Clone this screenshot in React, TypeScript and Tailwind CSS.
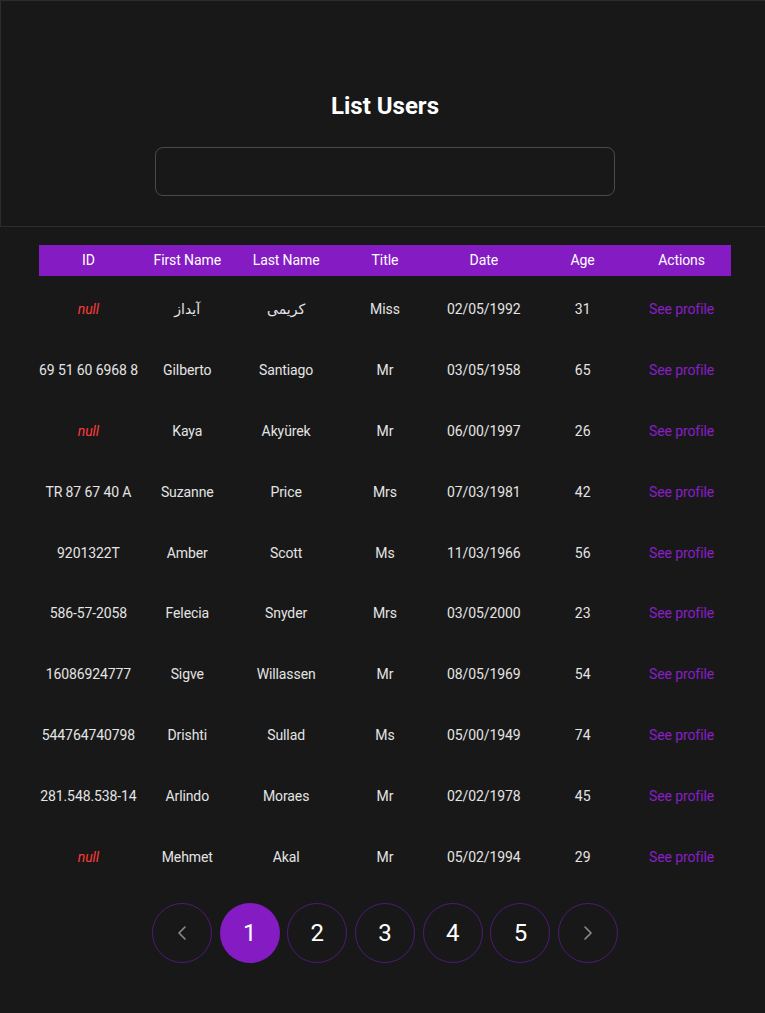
import { ChevronLeft, ChevronRight } from "lucide-react";

type User = {
  id: string | null;
  first: string;
  last: string;
  title: string;
  date: string;
  age: number;
};

const users: User[] = [
  { id: null, first: "آیداز", last: "کریمی", title: "Miss", date: "02/05/1992", age: 31 },
  { id: "69 51 60 6968 8", first: "Gilberto", last: "Santiago", title: "Mr", date: "03/05/1958", age: 65 },
  { id: null, first: "Kaya", last: "Akyürek", title: "Mr", date: "06/00/1997", age: 26 },
  { id: "TR 87 67 40 A", first: "Suzanne", last: "Price", title: "Mrs", date: "07/03/1981", age: 42 },
  { id: "9201322T", first: "Amber", last: "Scott", title: "Ms", date: "11/03/1966", age: 56 },
  { id: "586-57-2058", first: "Felecia", last: "Snyder", title: "Mrs", date: "03/05/2000", age: 23 },
  { id: "16086924777", first: "Sigve", last: "Willassen", title: "Mr", date: "08/05/1969", age: 54 },
  { id: "544764740798", first: "Drishti", last: "Sullad", title: "Ms", date: "05/00/1949", age: 74 },
  { id: "281.548.538-14", first: "Arlindo", last: "Moraes", title: "Mr", date: "02/02/1978", age: 45 },
  { id: null, first: "Mehmet", last: "Akal", title: "Mr", date: "05/02/1994", age: 29 },
];

const headers = ["ID", "First Name", "Last Name", "Title", "Date", "Age", "Actions"];

const App = () => {
  return (
    <div className="w-full min-h-screen overflow-hidden bg-[#181818]">
      <div
        className="w-[770px] text-[#e4e4e4]"
        style={{ fontFamily: "Roboto, 'Noto Sans', 'DejaVu Sans', sans-serif" }}
      >
        <header className="h-[227px] border border-[#2c2c2c] flex flex-col items-center pt-[90px]">
          <h1 className="text-[24px] leading-[30px] font-bold text-white">List Users</h1>
          <input
            type="text"
            className="mt-[26px] w-[460px] h-[49px] rounded-lg border border-[#4a4a4a] bg-transparent outline-none px-3 text-white"
          />
        </header>

        <main className="px-[39px] pt-[18px]">
          <table className="w-full table-fixed border-collapse text-[14px] tracking-[-0.1px]">
            <thead>
              <tr className="bg-[#851bc3] text-white h-[31px]">
                {headers.map((h) => (
                  <th key={h} className="font-normal text-center">
                    {h}
                  </th>
                ))}
              </tr>
            </thead>
            <tbody>
              {users.map((u, i) => (
                <tr key={i} className="h-[60.8px] text-center whitespace-nowrap">
                  <td className="pt-[7px]">
                    {u.id === null ? <span className="italic text-[#ff3a3a]">null</span> : u.id}
                  </td>
                  <td className="pt-[7px]">{u.first}</td>
                  <td className="pt-[7px]">{u.last}</td>
                  <td className="pt-[7px]">{u.title}</td>
                  <td className="pt-[7px]">{u.date}</td>
                  <td className="pt-[7px]">{u.age}</td>
                  <td className="pt-[7px]">
                    <a href="#" className="text-[#8a1ec9]">
                      See profile
                    </a>
                  </td>
                </tr>
              ))}
            </tbody>
          </table>

          <nav className="flex justify-center gap-[7.7px] mt-[19px] pb-[49px]">
            <button className="w-[60px] h-[60px] rounded-full border border-[#4e1a78] flex items-center justify-center text-[#8c8c8c]">
              <ChevronLeft className="w-6 h-6" strokeWidth={1.6} />
            </button>
            {[1, 2, 3, 4, 5].map((n) => (
              <button
                key={n}
                className={
                  n === 1
                    ? "w-[60px] h-[60px] rounded-full bg-[#851bc3] text-white text-[24px] flex items-center justify-center"
                    : "w-[60px] h-[60px] rounded-full border border-[#4e1a78] text-white text-[24px] flex items-center justify-center"
                }
              >
                {n}
              </button>
            ))}
            <button className="w-[60px] h-[60px] rounded-full border border-[#4e1a78] flex items-center justify-center text-[#8c8c8c]">
              <ChevronRight className="w-6 h-6" strokeWidth={1.6} />
            </button>
          </nav>
        </main>
      </div>
    </div>
  );
};

export default App;
